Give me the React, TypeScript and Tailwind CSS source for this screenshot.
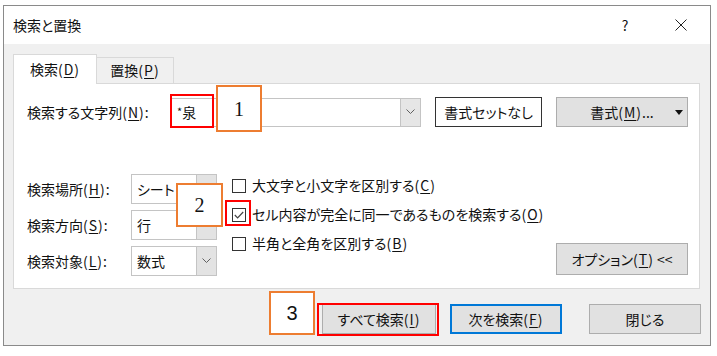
import React from "react";

const font = { fontFamily: '"Noto Sans CJK JP", "Noto Sans", sans-serif', fontFeatureSettings: '"palt"' };

function Chevron() {
  return (
    <svg width="9" height="6" viewBox="0 0 9 6">
      <polyline points="0.5,0.5 4.5,4.5 8.5,0.5" fill="none" stroke="#606060" strokeWidth="1" />
    </svg>
  );
}

function U({ c }: { c: string }) {
  return (
    <span className="tracking-[1px]">
      (<span className="underline underline-offset-[2px] decoration-1">{c}</span>)
    </span>
  );
}

function Select({ value }: { value: string }) {
  return (
    <div className="flex h-[30px] w-[86px] border border-[#c4c4c4] bg-white">
      <div className="flex flex-1 items-center pl-[5px] text-[14px]">{value}</div>
      <div className="flex w-[20px] items-center justify-center border-l border-[#c4c4c4] bg-[#e3e3e3]">
        <Chevron />
      </div>
    </div>
  );
}

function Check({ checked, children }: { checked?: boolean; children: React.ReactNode }) {
  return (
    <div className="flex h-[29px] items-center">
      <div className="flex h-[14px] w-[14px] items-center justify-center border border-[#333333] bg-white">
        {checked && (
          <svg width="10" height="8" viewBox="0 0 10 8">
            <polyline points="0.8,4 3.6,6.8 9.2,1" fill="none" stroke="#444444" strokeWidth="1.2" />
          </svg>
        )}
      </div>
      <div className="ml-[6px] text-[14px]">{children}</div>
    </div>
  );
}

export default function App() {
  return (
    <div className="relative h-[356px] w-[717px] overflow-hidden bg-white pl-[3px] pt-[5px] text-[#111111]" style={font}>
      <div className="flex h-[341px] w-[708px] flex-col border border-[#8a8a8a]">
        {/* Title bar */}
        <div className="flex h-[38px] items-center bg-white pl-[9px] pr-[6px]">
          <div className="text-[14px]">検索と置換</div>
          <div className="ml-auto flex h-full w-[46px] items-center justify-center text-[14px]">?</div>
          <div className="ml-[10px] flex h-full w-[46px] items-center justify-center">
            <svg width="12" height="12" viewBox="0 0 12 12">
              <path d="M0.5 0.5 L11.5 11.5 M11.5 0.5 L0.5 11.5" stroke="#222" strokeWidth="1" />
            </svg>
          </div>
        </div>
        {/* Body */}
        <div className="flex flex-1 flex-col bg-[#f0f0f0] pl-[9px] pt-[10px]">
          {/* Tabs */}
          <div className="flex h-[29px] items-end">
            <div className="relative z-10 -mb-px flex h-[30px] w-[84px] items-center justify-center border-l border-r border-t border-[#d9d9d9] bg-white text-[14px]">
              <span>
                検索<U c="D" />
              </span>
            </div>
            <div className="flex h-[26px] w-[77px] items-center justify-center border-r border-t border-[#d9d9d9] bg-[#f0f0f0] text-[14px]">
              <span>
                置換<U c="P" />
              </span>
            </div>
          </div>
          {/* Panel */}
          <div className="flex h-[206px] w-[687px] flex-col border border-[#d9d9d9] bg-white pl-[13px] pr-[11px]">
            <div className="mt-[13px] flex items-center">
              <div className="w-[144px] text-[14px]">
                検索する文字列<U c="N" />:
              </div>
              <div className="flex h-[29px] w-[250px] border border-[#c4c4c4] bg-white">
                <div className="flex flex-1 items-center pl-[5px] text-[14px]">
                  <span className="relative -top-[1px] text-[11px]">*</span>泉
                </div>
                <div className="flex w-[20px] items-center justify-center border-l border-[#c4c4c4] bg-[#e6e6e6]">
                  <Chevron />
                </div>
              </div>
              <div className="ml-[14px] flex h-[30px] w-[107px] items-center justify-center border border-[#333333] bg-white text-[14px]">
                書式セットなし
              </div>
              <div className="relative ml-auto flex h-[30px] w-[132px] items-center justify-center border border-[#adadad] bg-[#e1e1e1] text-[14px]">
                <span>
                  書式<U c="M" />...
                </span>
                <svg className="absolute right-[4px] top-[12px]" width="8" height="5" viewBox="0 0 8 5">
                  <polygon points="0,0 8,0 4,5" fill="#111" />
                </svg>
              </div>
            </div>
            {/* Options */}
            <div className="mt-[44px] flex">
              <div className="flex flex-col gap-[6px] pt-[3px]">
                <div className="flex items-center">
                  <div className="w-[104px] text-[14px]">
                    検索場所<U c="H" />:
                  </div>
                  <Select value="シート" />
                </div>
                <div className="flex items-center">
                  <div className="w-[104px] text-[14px]">
                    検索方向<U c="S" />:
                  </div>
                  <Select value="行" />
                </div>
                <div className="flex items-center">
                  <div className="w-[104px] text-[14px]">
                    検索対象<U c="L" />:
                  </div>
                  <Select value="数式" />
                </div>
              </div>
              <div className="ml-[15px] flex flex-col">
                <Check>
                  大文字と小文字を区別する<U c="C" />
                </Check>
                <Check checked>
                  セル内容が完全に同一であるものを検索する<U c="O" />
                </Check>
                <Check>
                  半角と全角を区別する<U c="B" />
                </Check>
              </div>
              <div className="ml-auto mt-[72px] flex h-[32px] w-[132px] items-center justify-center border border-[#adadad] bg-[#e1e1e1] text-[14px]">
                <span>
                  オプション<U c="T" /> &lt;&lt;
                </span>
              </div>
            </div>
          </div>
          {/* Bottom buttons */}
          <div className="mt-[15px] flex pl-[309px]">
            <div className="flex h-[30px] w-[114px] items-center justify-center border border-[#adadad] bg-[#e1e1e1] text-[14px]">
              <span>
                すべて検索<U c="I" />
              </span>
            </div>
            <div className="ml-[14px] flex h-[30px] w-[112px] items-center justify-center border-2 border-[#0078d7] bg-[#e1e1e1] text-[14px]">
              <span>
                次を検索<U c="F" />
              </span>
            </div>
            <div className="ml-[27px] flex h-[30px] w-[112px] items-center justify-center border border-[#adadad] bg-[#e1e1e1] text-[14px]">
              閉じる
            </div>
          </div>
        </div>
      </div>

      {/* Annotation overlays */}
      <div className="absolute left-[170px] top-[94px] h-[34px] w-[44px] border-2 border-[#ff0000]" />
      <div className="absolute left-[216px] top-[85px] flex h-[47px] w-[46px] items-center justify-center border-2 border-[#ed7d31] bg-white text-[20px]" style={{ fontFamily: '"Liberation Serif", serif' }}>
        1
      </div>
      <div className="absolute left-[176px] top-[183px] flex h-[44px] w-[47px] items-center justify-center border-2 border-[#ed7d31] bg-white text-[20px]" style={{ fontFamily: '"Liberation Serif", serif' }}>
        2
      </div>
      <div className="absolute left-[225px] top-[200px] h-[26px] w-[26px] border-2 border-[#ff0000]" />
      <div className="absolute left-[269px] top-[291px] flex h-[44px] w-[46px] items-center justify-center border-2 border-[#ed7d31] bg-white text-[20px]" style={{ fontFamily: '"Liberation Sans", sans-serif' }}>
        3
      </div>
      <div className="absolute left-[317px] top-[303px] h-[33px] w-[122px] border-2 border-[#ff0000]" />
    </div>
  );
}
